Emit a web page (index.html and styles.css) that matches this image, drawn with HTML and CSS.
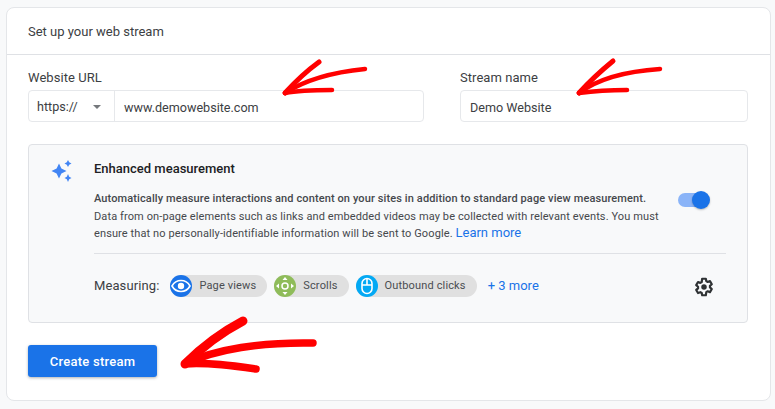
FILE: index.html
```html
<!DOCTYPE html>
<html lang="en">
<head>
<meta charset="utf-8">
<title>Set up your web stream</title>
<link rel="stylesheet" href="styles.css">
</head>
<body>
<main class="card">
  <header class="card-head">Set up your web stream</header>
  <div class="card-body">
    <div class="fields">
      <div class="field field-url">
        <div class="label">Website URL</div>
        <div class="input">
          <div class="proto">https://<span class="caret"></span></div>
          <div class="value">www.demowebsite.com</div>
        </div>
      </div>
      <div class="field field-name">
        <div class="label">Stream name</div>
        <div class="input"><div class="value">Demo Website</div></div>
      </div>
    </div>
    <section class="panel">
      <svg class="sparkle" width="22" height="22" viewBox="0 0 22 22"><path fill="#4285f4" d="M8 3.500 10.400 8.600 15.500 11 10.400 13.400 8 18.500 5.600 13.400.5 11 5.600 8.600zM17 0l1.200 2.300 2.300 1.200-2.300 1.200L17 7l-1.200-2.300-2.300-1.200 2.300-1.200zM17 14l1.200 2.800 2.300 1.200-2.300 1.200L17 22l-1.200-2.800-2.300-1.200 2.300-1.200z"/></svg>
      <div class="panel-main">
        <h2 class="panel-title">Enhanced measurement</h2>
        <div class="desc-row">
          <p class="desc"><b>Automatically measure interactions and content on your sites in addition to standard page view measurement.</b><br>Data from on-page elements such as links and embedded videos may be collected with relevant events. You must ensure that no personally-identifiable information will be sent to Google. <a class="learn">Learn more</a></p>
          <div class="toggle"><span class="knob"></span></div>
        </div>
        <div class="measuring">
          <span class="m-label">Measuring:</span>
          <span class="chip"><span class="chip-ic ic-blue"><svg width="20" height="14" viewBox="0 0 20 14"><path fill="none" stroke="#fff" stroke-width="1.600" d="M1 7c2-3.600 5-5.500 9-5.500S17 3.400 19 7c-2 3.600-5 5.500-9 5.500S3 10.600 1 7z"/><circle cx="10" cy="7" r="3.200" fill="#fff"/></svg></span>Page views</span>
          <span class="chip"><span class="chip-ic ic-green"><svg width="18" height="18" viewBox="0 0 18 18"><circle cx="9" cy="9" r="3" fill="none" stroke="#fff" stroke-width="1.500"/><path fill="#fff" d="M9 0l2.500 3h-5zM9 18l-2.500-3h5zM0 9l3-2.500v5zM18 9l-3 2.500v-5z"/></svg></span>Scrolls</span>
          <span class="chip"><span class="chip-ic ic-cyan"><svg width="14" height="18" viewBox="0 0 14 18"><rect x="2" y="1.500" width="10" height="15" rx="5" fill="none" stroke="#fff" stroke-width="1.600"/><path stroke="#fff" stroke-width="1.600" d="M2 8h10M7 2v6"/></svg></span>Outbound clicks</span>
          <a class="more">+ 3 more</a>
          <svg class="gear" width="22" height="22" viewBox="0 0 24 24"><path fill="none" stroke="#2f3234" stroke-width="2.400" stroke-linejoin="round" d="M10 3h4l.5 2.600 1.500.9 2.500-.9 2 3.400-2 1.700v1.800l2 1.700-2 3.400-2.500-.9-1.500.9L14 21h-4l-.5-2.400-1.500-.9-2.500.9-2-3.400 2-1.700v-1.800l-2-1.700 2-3.400 2.500.9 1.500-.9z"/><circle cx="12" cy="12" r="3" fill="#2f3234"/></svg>
        </div>
      </div>
    </section>
    <button class="create" type="button">Create stream</button>
  </div>
</main>
<svg class="arrows" width="775" height="409" viewBox="0 0 775 409">
  <g fill="none" stroke="#f00" stroke-linecap="round" stroke-linejoin="round">
    <g>
      <path stroke-width="5" d="M285 93C295 82 308 70 319 62"/>
      <path stroke-width="4.500" d="M285 93C305 80 335 72 365 69"/>
      <path stroke-width="4.500" d="M285 93C300 90 318 90 332 90"/>
    </g>
    <g>
      <path stroke-width="5" d="M579 93C589 82 602 70 613 61"/>
      <path stroke-width="4.500" d="M579 93C599 78 630 71 660 69"/>
      <path stroke-width="4.500" d="M579 93C594 91 612 90 627 90"/>
    </g>
    <g>
      <path stroke-width="9" d="M185 364C202 347 224 331 243 321"/>
      <path stroke-width="7.500" d="M185 364C215 349 262 342 313 343"/>
      <path stroke-width="7.500" d="M185 364C208 362 235 366 256 369"/>
    </g>
  </g>
</svg>
</body>
</html>
```
FILE: styles.css
```css
* { box-sizing: border-box; }
html, body { margin: 0; height: 409px; overflow: hidden; }
body {
  background: #f8f9fa;
  padding: 7px 4px 0 6px;
  font-family: Roboto, "Liberation Sans", sans-serif;
  color: #3c4043;
  position: relative;
}
.card {
  height: 394px;
  background: #fff;
  border: 1px solid #e4e6e9;
  border-radius: 8px;
}
.card-head {
  height: 47px;
  padding: 15px 21px 0;
  font-size: 13px;
  line-height: 18px;
  border-bottom: 1px solid #dfe1e5;
}
.card-body { padding: 15px 22px 0 21px; }
.fields { display: flex; gap: 36px; width: 720px; }
.field-url { width: 396px; }
.field-name { width: 288px; }
.label { font-size: 13px; line-height: 16px; margin-bottom: 4px; letter-spacing: .05px; }
.input {
  display: flex;
  height: 32px;
  border: 1px solid #e6e8eb;
  border-radius: 4px;
  font-size: 12.600px;
  line-height: 32px;
}
.proto {
  width: 86px;
  padding: 1px 0 0 8px;
  border-right: 1px solid #e6e8eb;
  display: flex;
  align-items: center;
  position: relative;
  flex: none;
}
.caret {
  position: absolute;
  left: 64px;
  top: 14px;
  border: 4px solid transparent;
  border-top: 4px solid #75787c;
  border-bottom: 0;
}
.value { padding: 1px 0 0 9px; line-height: 32px; }
.panel {
  display: flex;
  width: 720px;
  height: 179px;
  margin-top: 22px;
  background: #f8f9fa;
  border: 1px solid #dfe1e5;
  border-radius: 4px;
}
.sparkle { margin: 15px 0 0 22px; flex: none; }
.panel-main { margin-left: 21px; width: 632px; padding-top: 15px; }
.panel-title { margin: 0; font-size: 13px; line-height: 18px; font-weight: 500; color: #202124; }
.desc-row { display: flex; margin-top: 12px; height: 64px; border-bottom: 1px solid #dfe1e5; }
.desc { margin: 0; width: 572px; font-size: 11px; line-height: 17.600px; color: #45484c; letter-spacing: .11px; }
.desc b { font-weight: 500; }
.learn { color: #1a73e8; font-size: 13px; line-height: 1; letter-spacing: 0; }
.toggle {
  position: relative;
  width: 28px;
  height: 14px;
  margin: 3px 0 0 12px;
  background: #8ab4f8;
  border-radius: 7px;
}
.knob {
  position: absolute;
  right: -4px;
  top: -2px;
  width: 18px;
  height: 18px;
  border-radius: 50%;
  background: #1a73e8;
  box-shadow: 0 1px 2px rgba(0,0,0,.25);
}
.measuring { display: flex; align-items: center; height: 63px; }
.m-label { font-size: 13px; margin-right: 11px; letter-spacing: .1px; }
.chip {
  display: flex;
  align-items: center;
  height: 22px;
  margin-right: 7px;
  padding-right: 11px;
  background: #e0e0e0;
  border-radius: 11px;
  font-size: 11px;
  letter-spacing: .15px;
  color: #4a4d51;
}
.chip-ic {
  width: 22px;
  height: 22px;
  margin-right: 7px;
  border-radius: 50%;
  display: flex;
  align-items: center;
  justify-content: center;
}
.ic-blue { background: #1a73e8; }
.ic-green { background: #8fbc5a; }
.ic-cyan { background: #03a9f4; }
.more { margin-left: 4px; color: #1a73e8; font-size: 13px; }
.gear { margin: 2px 11px 0 auto; }
.create {
  display: block;
  width: 129px;
  height: 32px;
  margin-top: 22px;
  border: 0;
  border-radius: 3px;
  background: #1a73e8;
  color: #fff;
  font-family: Roboto, "Liberation Sans", sans-serif;
  font-size: 13px;
  font-weight: 500;
  letter-spacing: .25px;
  box-shadow: 0 1px 3px rgba(60,64,67,.4);
}
.arrows { position: absolute; left: 0; top: 0; pointer-events: none; }
```
